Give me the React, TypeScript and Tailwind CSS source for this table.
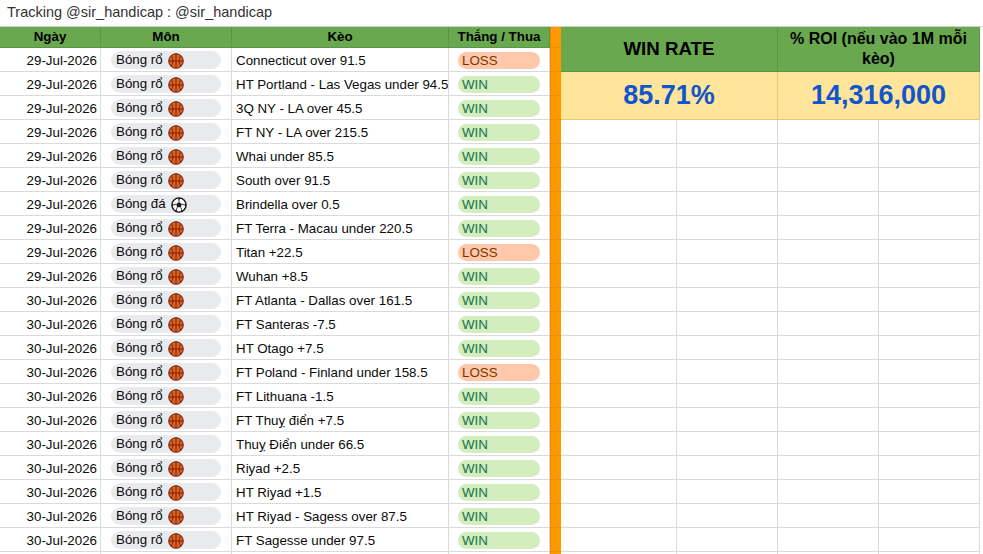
import React from "react";

type Row = {
  date: string;
  sport: "ro" | "da";
  bet: string;
  result: "WIN" | "LOSS";
};

const rows: Row[] = [
  { date: "29-Jul-2026", sport: "ro", bet: "Connecticut over 91.5", result: "LOSS" },
  { date: "29-Jul-2026", sport: "ro", bet: "HT Portland - Las Vegas under 94.5", result: "WIN" },
  { date: "29-Jul-2026", sport: "ro", bet: "3Q NY - LA over 45.5", result: "WIN" },
  { date: "29-Jul-2026", sport: "ro", bet: "FT NY - LA over 215.5", result: "WIN" },
  { date: "29-Jul-2026", sport: "ro", bet: "Whai under 85.5", result: "WIN" },
  { date: "29-Jul-2026", sport: "ro", bet: "South over 91.5", result: "WIN" },
  { date: "29-Jul-2026", sport: "da", bet: "Brindella over 0.5", result: "WIN" },
  { date: "29-Jul-2026", sport: "ro", bet: "FT Terra - Macau under 220.5", result: "WIN" },
  { date: "29-Jul-2026", sport: "ro", bet: "Titan +22.5", result: "LOSS" },
  { date: "29-Jul-2026", sport: "ro", bet: "Wuhan +8.5", result: "WIN" },
  { date: "30-Jul-2026", sport: "ro", bet: "FT Atlanta - Dallas over 161.5", result: "WIN" },
  { date: "30-Jul-2026", sport: "ro", bet: "FT Santeras -7.5", result: "WIN" },
  { date: "30-Jul-2026", sport: "ro", bet: "HT Otago +7.5", result: "WIN" },
  { date: "30-Jul-2026", sport: "ro", bet: "FT Poland - Finland under 158.5", result: "LOSS" },
  { date: "30-Jul-2026", sport: "ro", bet: "FT Lithuana -1.5", result: "WIN" },
  { date: "30-Jul-2026", sport: "ro", bet: "FT Thuỵ điển +7.5", result: "WIN" },
  { date: "30-Jul-2026", sport: "ro", bet: "Thuỵ Điển under 66.5", result: "WIN" },
  { date: "30-Jul-2026", sport: "ro", bet: "Riyad +2.5", result: "WIN" },
  { date: "30-Jul-2026", sport: "ro", bet: "HT Riyad +1.5", result: "WIN" },
  { date: "30-Jul-2026", sport: "ro", bet: "HT Riyad - Sagess over 87.5", result: "WIN" },
  { date: "30-Jul-2026", sport: "ro", bet: "FT Sagesse under 97.5", result: "WIN" },
];

function Basketball() {
  return (
    <svg width="16" height="16" viewBox="0 0 16 16" className="shrink-0 mt-[2px]">
      <circle cx="8" cy="8" r="7.3" fill="#e95b1c" stroke="#4b2110" strokeWidth="0.9" />
      <g fill="none" stroke="#4b2110" strokeWidth="0.75">
        <path d="M8 0.8 V15.2" />
        <path d="M0.8 8 H15.2" />
        <path d="M3.2 2.6 Q6.4 8 3.2 13.4" />
        <path d="M12.8 2.6 Q9.6 8 12.8 13.4" />
      </g>
    </svg>
  );
}

function SoccerBall() {
  return (
    <svg width="16" height="16" viewBox="0 0 16 16" className="shrink-0 mt-[2px]">
      <circle cx="8" cy="8" r="7.1" fill="#fff" stroke="#1a1a1a" strokeWidth="1.4" />
      <path d="M8 5 L10.8 7 L9.8 10.3 L6.2 10.3 L5.2 7 Z" fill="#1a1a1a" />
      <path d="M6.2 1 L9.8 1 L8 3.2 Z" fill="#1a1a1a" />
      <path d="M14.8 5.6 L15 9.6 L13.1 8 Z" fill="#1a1a1a" />
      <path d="M1.2 5.6 L1 9.6 L2.9 8 Z" fill="#1a1a1a" />
      <path d="M3.6 13.4 L6.4 15 L5.6 12.4 Z" fill="#1a1a1a" />
      <path d="M12.4 13.4 L9.6 15 L10.4 12.4 Z" fill="#1a1a1a" />
      <g stroke="#1a1a1a" strokeWidth="0.9">
        <path d="M8 3 V5" />
        <path d="M10.8 7 L13.2 8" />
        <path d="M5.2 7 L2.8 8" />
        <path d="M9.8 10.3 L10.6 12.6" />
        <path d="M6.2 10.3 L5.4 12.6" />
      </g>
    </svg>
  );
}

const cell = "border-r border-b border-[#dadada] h-[24px] flex overflow-hidden whitespace-nowrap";
const textCell = `${cell} items-end pb-[2px] leading-[16px]`;
const headCell =
  "border-r border-b border-[#5b9443] bg-[#6aa84f] flex items-center justify-center font-bold text-black";
const orange = "bg-[#ff9900] border-l border-[#e8890a] border-b border-b-[#ee8f05]";

export default function App() {
  return (
    <div className="w-[983px] h-[554px] overflow-hidden bg-white text-[13.33px] text-[#0a0a0a] font-['Liberation_Sans',Arial,sans-serif]">
      {/* TITLE */}
      <div className="h-[27px] border-b border-[#cfcfcf] flex items-center pl-[7px] text-[14.5px] text-[#333]">
        Tracking @sir_handicap : @sir_handicap
      </div>

      {/* SHEET */}
      <div className="grid grid-cols-[101px_131px_217px_101px_11px_116px_101px_101px_101px] grid-rows-[21px] auto-rows-[24px]">
        {/* HEADER */}
        <div className={headCell}>Ngày</div>
        <div className={headCell}>Môn</div>
        <div className={headCell}>Kèo</div>
        <div className={headCell}>Thắng / Thua</div>
        <div className={orange} />
        <div className="col-span-2 row-span-2 bg-[#6aa84f] border-r border-b border-[#5b9443] flex items-center justify-center font-bold text-[18.7px] text-black">
          WIN RATE
        </div>
        <div className="col-span-2 row-span-2 bg-[#6aa84f] border-r border-b border-[#5b9443] flex items-center justify-center text-center font-bold text-[16px] leading-[20px] text-black px-[6px]">
          % ROI (nếu vào 1M mỗi kèo)
        </div>

        {rows.map((r, i) => (
          <React.Fragment key={i}>
            <div className={`${textCell} justify-end pr-[3px]`}>{r.date}</div>
            <div className={`${cell} items-center px-[10px]`}>
              <div className="w-full h-[18px] rounded-full bg-[#e8eaed] flex items-center gap-[5px] pl-[5px] leading-[16px]">
                <span>{r.sport === "ro" ? "Bóng rổ" : "Bóng đá"}</span>
                {r.sport === "ro" ? <Basketball /> : <SoccerBall />}
              </div>
            </div>
            <div className={`${textCell} pl-[4px]`}>{r.bet}</div>
            <div className={`${cell} items-end pb-[2px] px-[9px]`}>
              <div
                className={
                  r.result === "WIN"
                    ? "w-full h-[17px] rounded-full bg-[#d4edbc] text-[#11734b] flex items-center pl-[4px] leading-[16px]"
                    : "w-full h-[17px] rounded-full bg-[#ffc8aa] text-[#753800] flex items-center pl-[4px] leading-[16px]"
                }
              >
                {r.result}
              </div>
            </div>
            <div className={orange} />

            {i === 1 && (
              <>
                <div className="col-span-2 row-span-2 bg-[#ffe599] border-r border-b border-[#e4c979] flex items-center justify-center font-bold text-[27px] text-[#1155cc]">
                  85.71%
                </div>
                <div className="col-span-2 row-span-2 bg-[#ffe599] border-r border-b border-[#e4c979] flex items-center justify-center font-bold text-[27px] text-[#1155cc]">
                  14,316,000
                </div>
              </>
            )}

            {i >= 3 && (
              <>
                <div className={cell} />
                <div className={cell} />
                <div className={cell} />
                <div className={cell} />
              </>
            )}
          </React.Fragment>
        ))}

        {/* partial row at the bottom */}
        <div className={cell} />
        <div className={cell} />
        <div className={cell} />
        <div className={cell} />
        <div className={orange} />
        <div className={cell} />
        <div className={cell} />
        <div className={cell} />
        <div className={cell} />
      </div>
    </div>
  );
}
